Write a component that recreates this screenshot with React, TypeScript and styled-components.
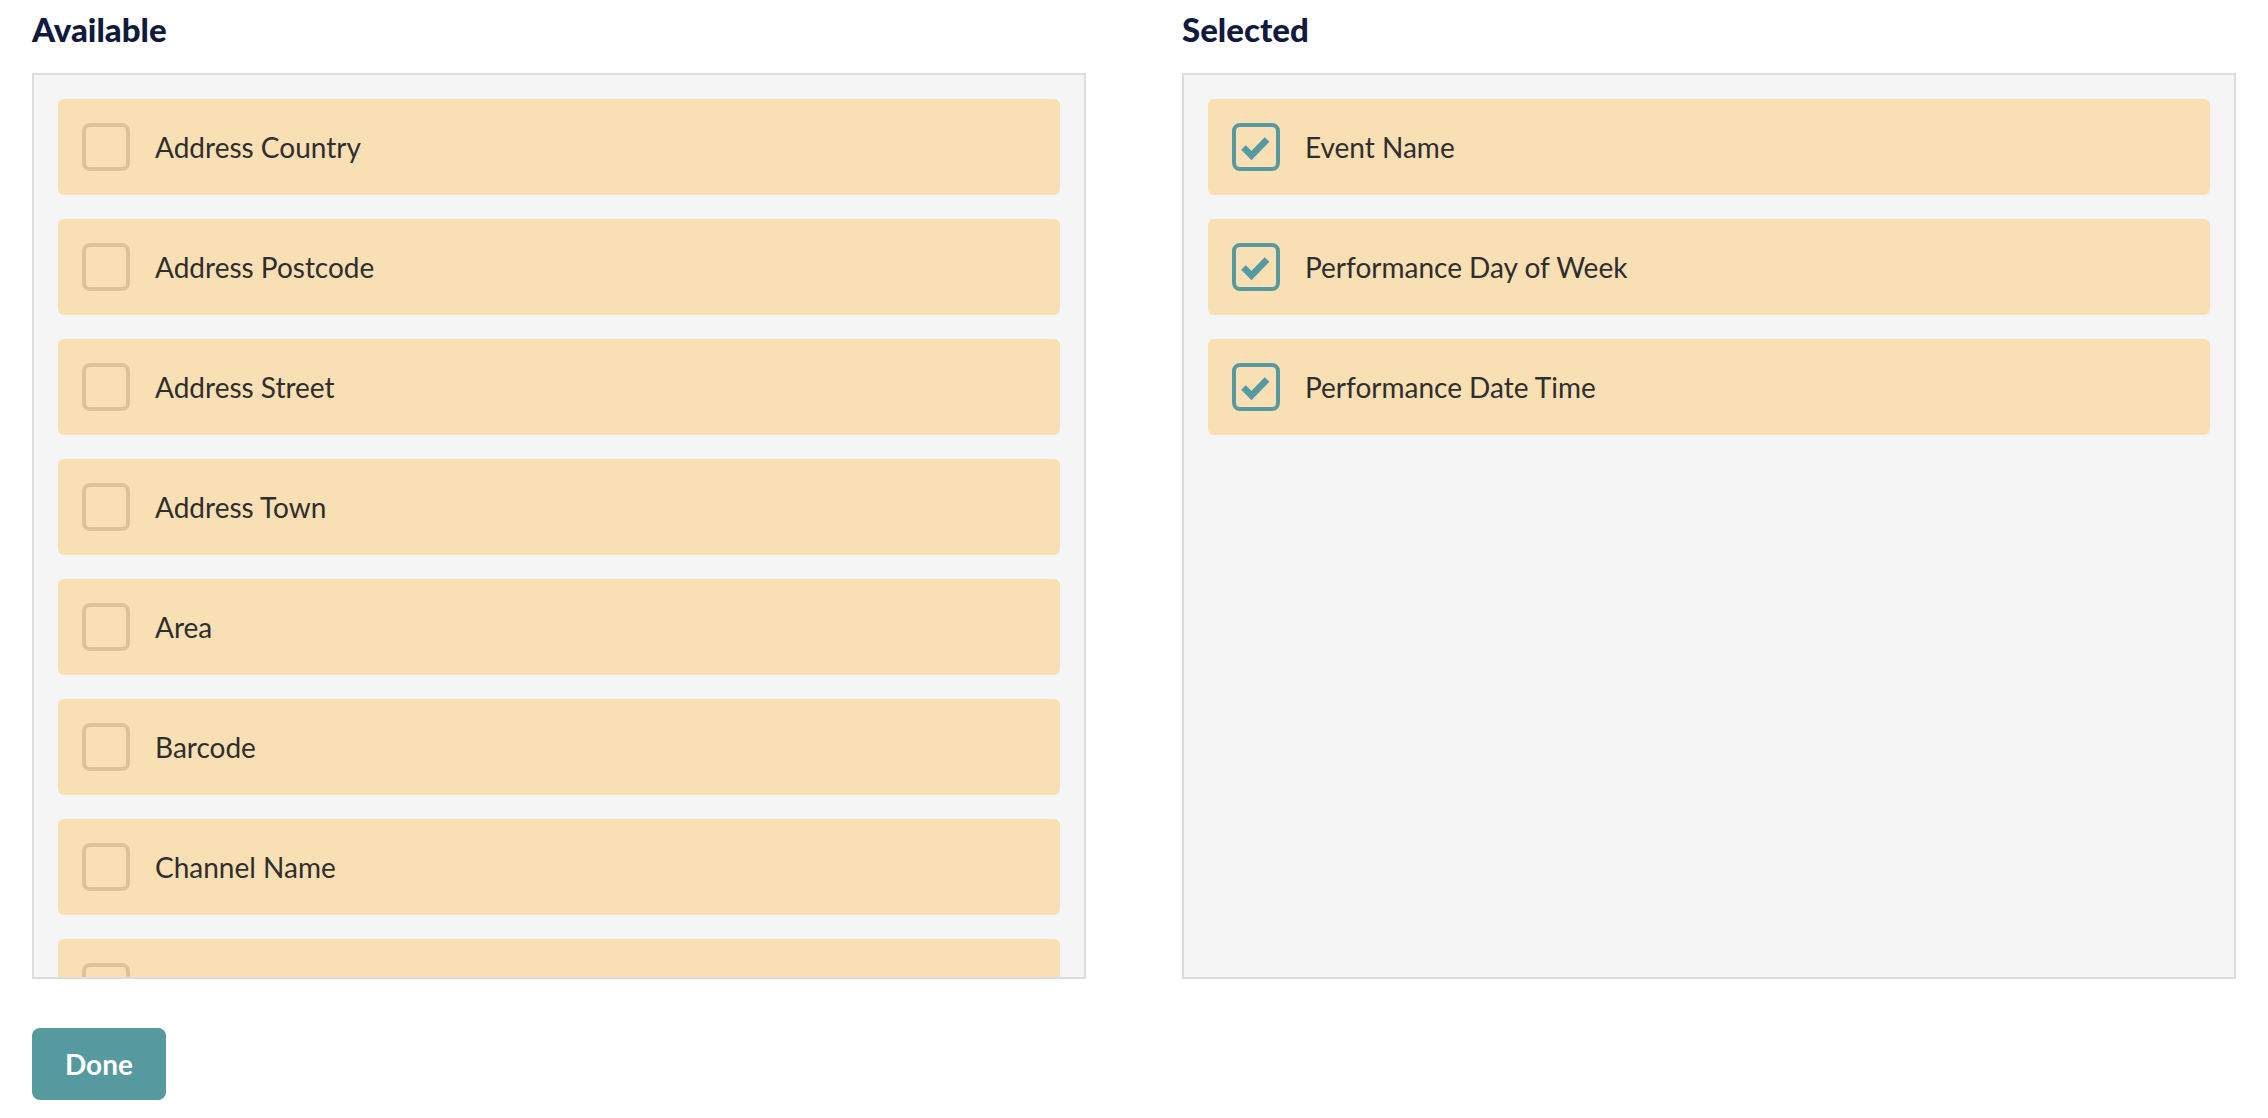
import React from "react";
import styled, { createGlobalStyle } from "styled-components";

const GlobalStyle = createGlobalStyle`
  html, body {
    margin: 0;
    padding: 0;
    background: #ffffff;
    font-family: Lato, "Open Sans", sans-serif;
  }
  * {
    box-sizing: border-box;
  }
`;

const available = [
  "Address Country",
  "Address Postcode",
  "Address Street",
  "Address Town",
  "Area",
  "Barcode",
  "Channel Name",
  "Customer Email Address",
];

const selected = ["Event Name", "Performance Day of Week", "Performance Date Time"];

const CheckIcon = () => (
  <svg width="40" height="40" viewBox="0 0 40 40" fill="none">
    <path d="M7.5 20.5 L15.5 28.5 L31 12.5" stroke="#56999f" strokeWidth="6.5" strokeLinejoin="miter" />
  </svg>
);

const Field = ({ label, checked }: { label: string; checked?: boolean }) => (
  <Item>
    <Box $checked={checked}>{checked && <CheckIcon />}</Box>
    <Label>{label}</Label>
  </Item>
);

export default function App() {
  return (
    <>
      <GlobalStyle />
      <Page>
        <Columns>
          <Column>
            <Title>Available</Title>
            <Panel>
              {available.map((name) => (
                <Field key={name} label={name} />
              ))}
            </Panel>
          </Column>
          <Column>
            <Title>Selected</Title>
            <Panel>
              {selected.map((name) => (
                <Field key={name} label={name} checked />
              ))}
            </Panel>
          </Column>
        </Columns>
        <Footer>
          <DoneButton>Done</DoneButton>
        </Footer>
      </Page>
    </>
  );
}

const Page = styled.div`
  padding: 10px 32px 0;
`;

const Columns = styled.div`
  display: grid;
  grid-template-columns: 1fr 1fr;
  column-gap: 96px;
`;

const Column = styled.section`
  display: flex;
  flex-direction: column;
`;

const Title = styled.h2`
  margin: 0 0 25px;
  font-size: 33px;
  line-height: 38px;
  font-weight: 900;
  color: #111a3d;
`;

const Panel = styled.div`
  height: 906px;
  border: 2px solid #dcdcdc;
  background: #f5f5f5;
  padding: 24px;
  display: flex;
  flex-direction: column;
  gap: 24px;
  overflow-y: auto;
  scrollbar-width: none;
  &::-webkit-scrollbar {
    display: none;
  }
`;

const Item = styled.div`
  flex: 0 0 96px;
  display: flex;
  align-items: center;
  gap: 25px;
  padding: 0 24px;
  background: #f9dfb4;
  border-radius: 6px;
`;

const Box = styled.span<{ $checked?: boolean }>`
  flex: 0 0 48px;
  width: 48px;
  height: 48px;
  border: 4px solid ${(p) => (p.$checked ? "#56999f" : "#dcc39b")};
  border-radius: 8px;
  display: flex;
  align-items: center;
  justify-content: center;
`;

const Label = styled.span`
  font-size: 28px;
  color: #2e2e2e;
`;

const Footer = styled.div`
  margin-top: 49px;
`;

const DoneButton = styled.button`
  height: 72px;
  padding: 0 33px;
  border: none;
  border-radius: 8px;
  background: #56999f;
  color: #ffffff;
  font-family: Lato, "Open Sans", sans-serif;
  font-size: 28px;
  font-weight: 700;
  cursor: pointer;
`;
